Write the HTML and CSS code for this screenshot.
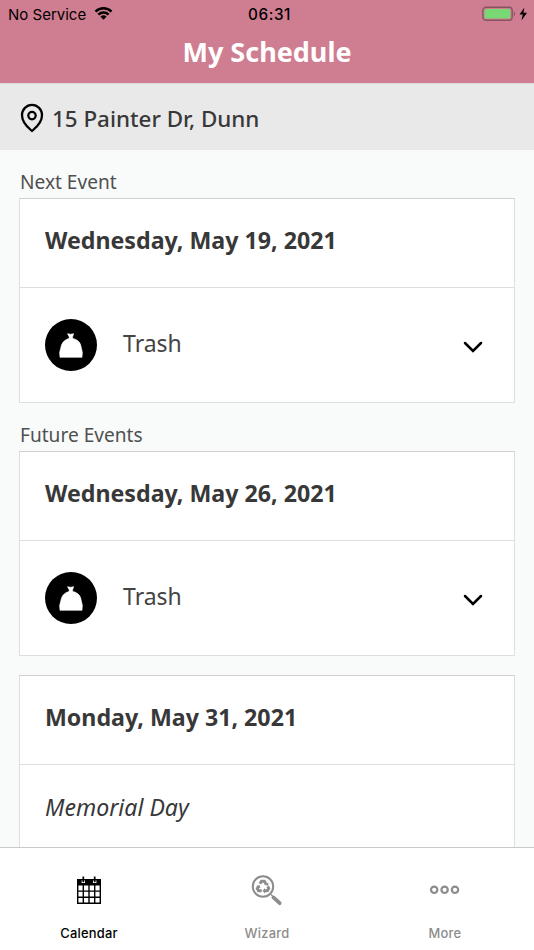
FILE: index.html
```html
<!DOCTYPE html>
<html lang="en">
<head>
<meta charset="utf-8">
<title>My Schedule</title>
<link rel="stylesheet" href="styles.css">
</head>
<body>
<svg class="defs" aria-hidden="true">
  <symbol id="bag" viewBox="0 0 52 52">
    <path d="M22.500 14.700 25.500 15.200 28.700 14.700 27.500 18 27.800 19.600C31.500 20.200 34.800 22.600 35.700 26L37.400 33.500 37 38.300H15L14.600 33.500 16.500 26C17.800 22.600 20.700 20.200 24 19.600L24.300 18Z" stroke="#fff" stroke-width=".6" stroke-linejoin="round"/>
  </symbol>
  <symbol id="chevron" viewBox="0 0 20 12">
    <path d="M2 2 10 10 18 2" fill="none" stroke="#000" stroke-width="2.500" stroke-linecap="round" stroke-linejoin="miter"/>
  </symbol>
</svg>
<div class="app">
  <header class="top">
    <div class="status">
      <div class="carrier"><span>No Service</span>
        <svg class="wifi" viewBox="0 0 20 15"><g fill="none" stroke="#000" stroke-width="2.6"><path d="M1.6 5.500a12 12 0 0 1 16.800 0"/><path d="M4.600 8.700a7.700 7.700 0 0 1 10.800 0"/></g><path d="M10 14 6.800 10.900a4.600 4.600 0 0 1 6.400 0Z"/></svg>
      </div>
      <div class="clock">06:31</div>
      <div class="power">
        <svg class="battery" viewBox="0 0 46 16"><rect x=".8" y="1.300" width="29.400" height="13" rx="3.200" fill="none" stroke="#875462" stroke-width="1.400"/><rect x="2.600" y="3.100" width="25.800" height="9.400" rx="1.600" fill="#78d873"/><path d="M31.800 5.300c1.700.7 1.700 4.300 0 5Z" fill="#875462"/><path d="M42.400 1.400 37.500 8.600h3.200l-1.200 5.800L45 6.800h-3.500Z"/></svg>
      </div>
    </div>
    <h1>My Schedule</h1>
  </header>
  <div class="address">
    <svg class="pin" viewBox="0 0 24 30"><g fill="none" stroke="#000" stroke-width="2.300"><path d="M12 28C8.500 24.800 2 20.300 2 12.200A10 10.300 0 0 1 22 12.200C22 20.300 15.500 24.800 12 28Z" stroke-linejoin="round"/><circle cx="12" cy="12.600" r="3.700"/></g></svg>
    <span>15 Painter Dr, Dunn</span>
  </div>
  <main>
    <h2>Next Event</h2>
    <section class="card">
      <h3>Wednesday, May 19, 2021</h3>
      <div class="event"><svg class="badge"><use href="#bag"/></svg><span>Trash</span><svg class="chev"><use href="#chevron"/></svg></div>
    </section>
    <h2>Future Events</h2>
    <section class="card">
      <h3>Wednesday, May 26, 2021</h3>
      <div class="event"><svg class="badge"><use href="#bag"/></svg><span>Trash</span><svg class="chev"><use href="#chevron"/></svg></div>
    </section>
    <section class="card">
      <h3>Monday, May 31, 2021</h3>
      <div class="holiday"><em>Memorial Day</em></div>
    </section>
  </main>
  <nav>
    <a class="tab active">
      <svg viewBox="0 0 32 32"><path d="M4 5H28V11.500H4Z"/><path d="M4.700 11V29.300H27.300V11M10.300 11V29.500M16 11V29.500M21.700 11V29.500M4.500 17.100H27.500M4.500 23.200H27.500" fill="none" stroke="#000" stroke-width="1.400"/><g fill="none"><path d="M10.300 6.500V9M21.700 6.500V9" stroke="#fff" stroke-width="3.400"/><path d="M10.300 2.500V8.300M21.700 2.500V8.300" stroke="#000" stroke-width="1.700"/></g></svg>
      <span>Calendar</span>
    </a>
    <a class="tab">
      <svg viewBox="0 0 32 32"><g fill="none" stroke="#8c8c8c"><circle cx="12" cy="12.500" r="10.200" stroke-width="2"/><path d="M22.400 23.400 28.700 29.200" stroke-width="3.700" stroke-linecap="round"/><path d="M19.300 19.800 22.500 23" stroke-width="1.200"/><g stroke-width="2.900"><path d="M8.900 9.700 10.500 7.200H13.300L15 10"/><path d="M16.700 12.400 17.700 14.500 16.300 16.800H13.300"/><path d="M10.700 16.800H7.500L6.300 14.500 7.500 12.400"/></g></g><g fill="#8c8c8c"><path d="M17.300 8.500V11.800L13.300 11Z"/><path d="M14 13.900V19.500L11.500 16.800Z"/><path d="M5 12 8.600 10.900 9.500 14.200Z"/></g></svg>
      <span>Wizard</span>
    </a>
    <a class="tab">
      <svg viewBox="0 0 32 32"><g fill="none" stroke="#8c8c8c" stroke-width="2.200"><circle cx="5.200" cy="15.800" r="3.200"/><circle cx="15.600" cy="15.800" r="3.200"/><circle cx="26" cy="15.800" r="3.200"/></g></svg>
      <span>More</span>
    </a>
  </nav>
</div>
</body>
</html>
```
FILE: styles.css
```css
* { box-sizing: border-box; }
body { margin: 0; background: #f9fbfa; color: #383838; font-family: "Noto Sans", sans-serif; }
h1, h2, h3 { margin: 0; }
svg { display: block; flex: none; }
.defs { display: none; }
.app { height: 950px; display: flex; flex-direction: column; overflow: hidden; }
.top { flex: none; height: 83px; background: #cf7d90; }
.status { height: 28px; display: grid; grid-template-columns: 1fr auto 1fr; align-items: center; padding: 0 6px 0 8px; color: #000; font-family: Inter, sans-serif; font-size: 15.3px; }
.carrier { display: flex; align-items: center; gap: 8px; font-size: 15px; letter-spacing: 0; }
.wifi { width: 19px; height: 15px; margin-top: -2px; }
.clock { font-weight: 500; letter-spacing: .6px; padding-left: 3px; }
.power { display: flex; justify-content: flex-end; }
.battery { width: 46px; height: 16px; margin-top: -1px; }
.top h1 { text-align: center; color: #fff; font-size: 27px; line-height: 48px; font-weight: 700; }
.address { flex: none; height: 67px; background: #e9e9e9; border-top: 1px solid #dadada; display: flex; align-items: center; padding: 1px 20px 0; font-size: 22.4px; font-weight: 500; }
.address span { padding-top: 2px; }
.pin { width: 24px; height: 30px; margin-right: 8px; }
main { flex: 1; min-height: 0; overflow: hidden; padding: 17px 19px 0; }
h2 { height: 31px; padding-left: 1px; line-height: 31px; color: #505050; font-size: 19.1px; font-weight: 400; }
.card { height: 205px; margin-bottom: 17px; background: #fff; border: 1px solid #dedede; border-top-color: #d0d0d0; }
.card + .card { margin-top: 19px; }
.card h3 { height: 89px; border-bottom: 1px solid #dedede; padding-left: 25px; line-height: 83px; font-size: 23.2px; font-weight: 700; }
.event { height: 114px; display: flex; align-items: center; padding: 0 32px 0 25px; font-size: 23px; color: #444; }
.event span { flex: 1; margin: -5px 0 0 26px; }
.badge { width: 52px; height: 52px; border-radius: 50%; background: #000; fill: #fff; }
.chev { width: 20px; height: 12px; margin: 3px -1px 0 1px; }
.holiday { padding-left: 25px; line-height: 84px; font-size: 23.1px; }
nav { flex: none; height: 103px; border-top: 1px solid #c9c9c9; background: #fff; display: grid; grid-template-columns: repeat(3, 1fr); }
.tab { display: flex; flex-direction: column; align-items: center; padding-top: 26px; color: #8c8c8c; font: 500 12.9px/18px Inter, sans-serif; letter-spacing: .25px; }
.tab svg { width: 32px; height: 32px; margin-bottom: 19px; }
.active { color: #000; }
```
